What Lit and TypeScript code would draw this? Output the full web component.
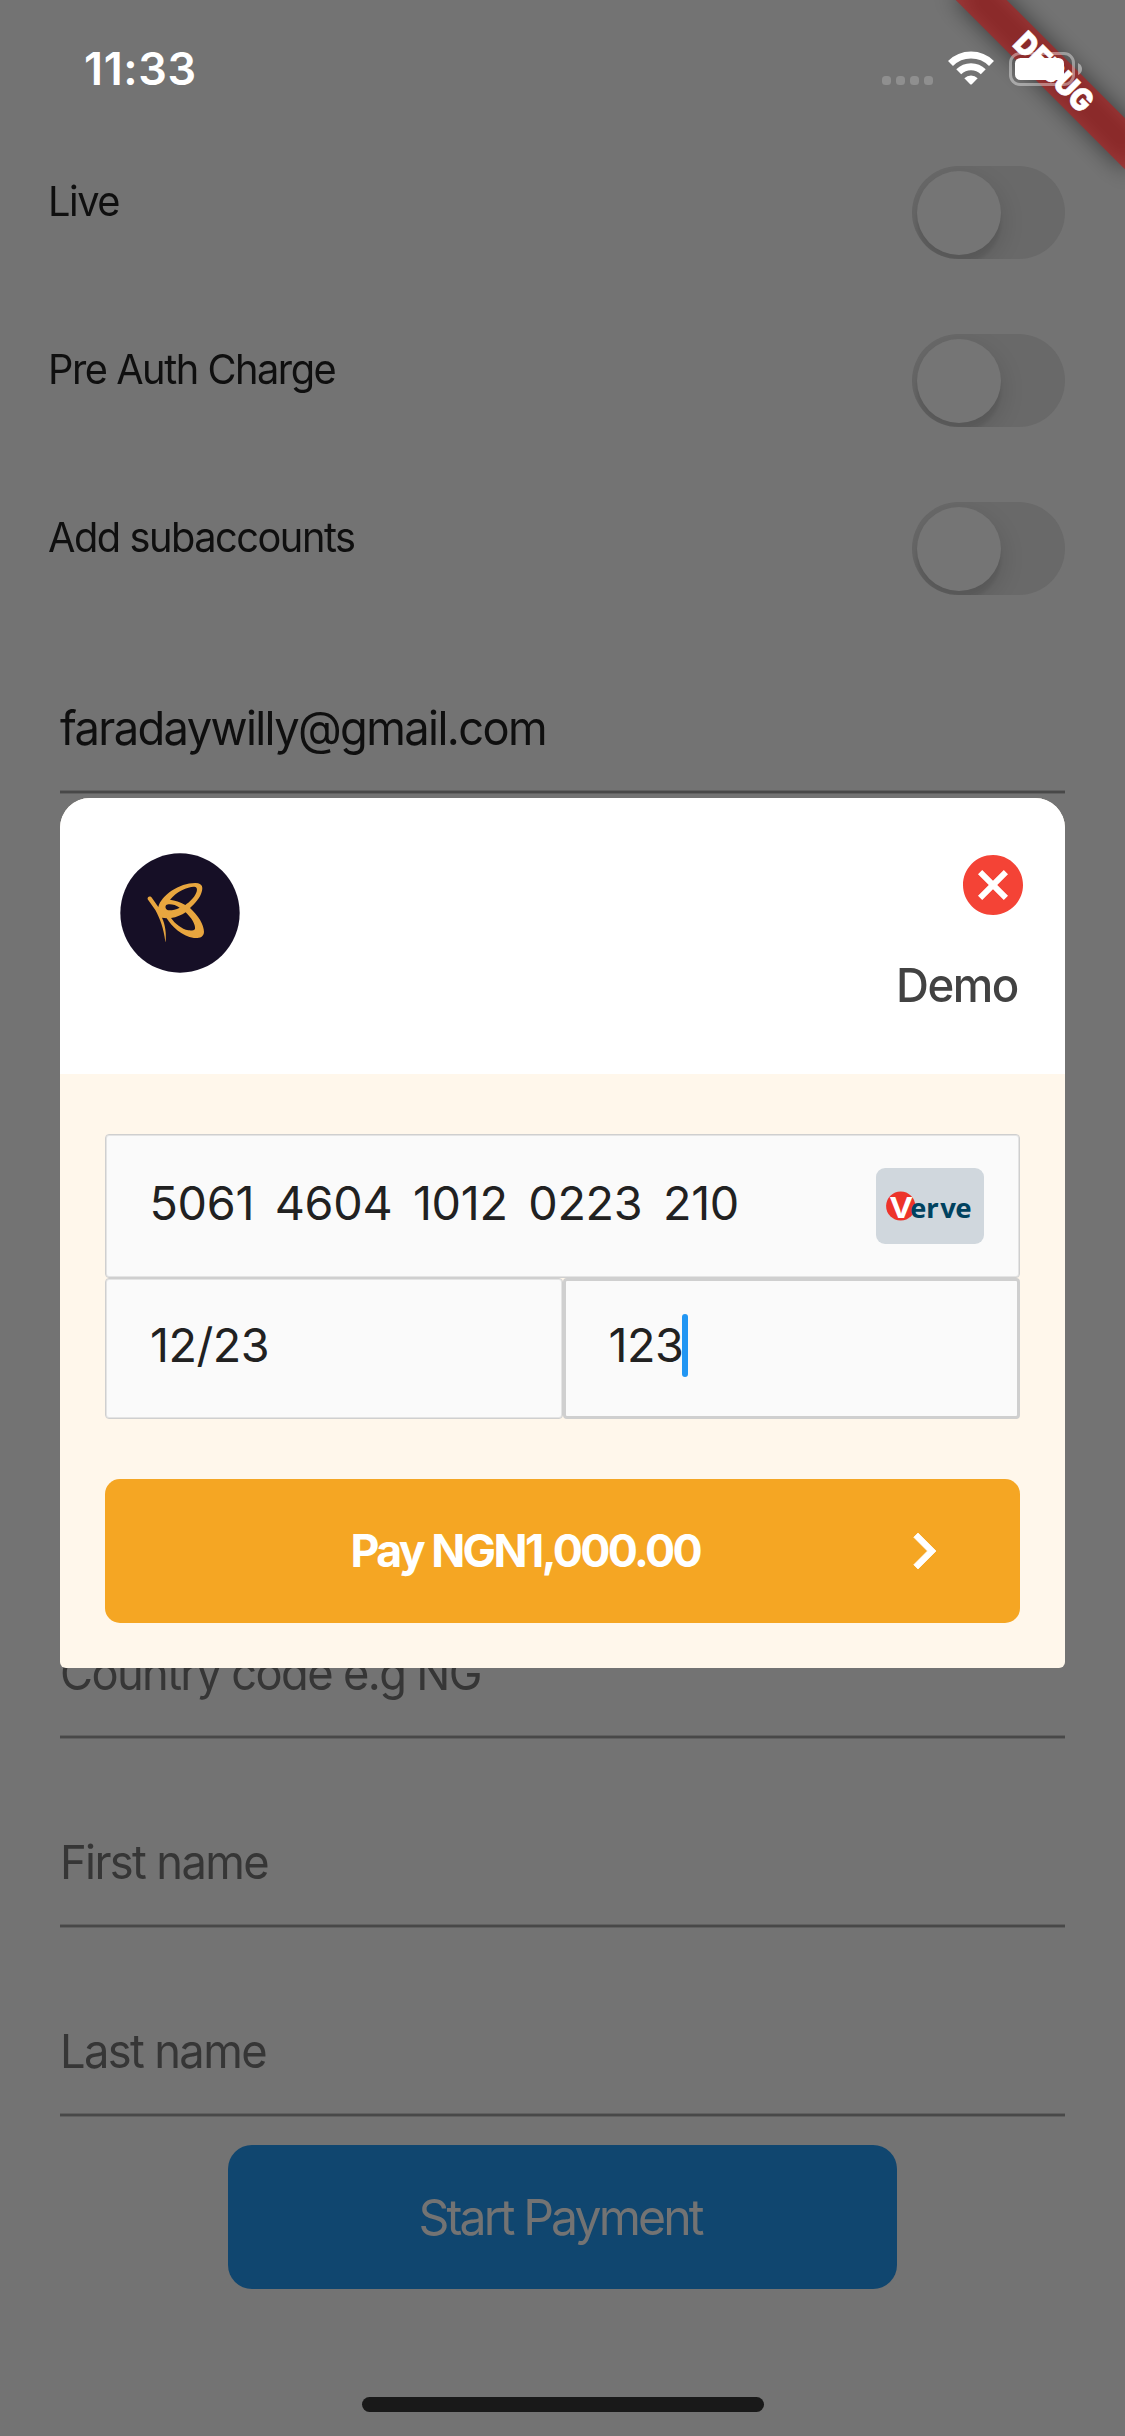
import { LitElement, html, svg, css } from "lit";
import { customElement, property } from "lit/decorators.js";

const wifiIcon = svg`
  <path d="M376.5 191.5A87 87 0 0 1 499.5 191.5" fill="none" stroke="#fff" stroke-width="21" />
  <path d="M401.2 216.2A52 52 0 0 1 474.8 216.2" fill="none" stroke="#fff" stroke-width="21" />
  <path d="M418 235.500A28.500 28.500 0 0 1 458 235.500L440.500 253.500Q438 256 435.500 253.500Z" fill="#fff" />`;

const butterfly = svg`
  <circle cx="420" cy="400" r="179" fill="#160f26" />
  <path fill="#e8a63f" fill-rule="evenodd" d="M323 359C321 351 331 347 336 355L355 382C364 346 420 309 467 310C489 311 489 325 485 337C480 355 465 372 450 385C475 408 492 435 492 457C491 474 476 476 462 475C425 470 395 440 380 416L366 414C376 435 379 460 377 486L376 486C371 445 360 417 346 391ZM390 360C410 335 445 320 463 321C473 322 472 332 468 341C462 355 448 368 436 376C420 366 405 362 390 360ZM393 415C410 413 425 406 437 398C455 415 467 435 465 447C463 453 452 453 445 452C425 448 405 432 393 415ZM378 377C385 371 405 374 419 384C405 391 390 393 382 391C376 388 375 382 378 377Z" />`;

@customElement("status-bar")
export class StatusBar extends LitElement {
  static styles = css`
    :host { display: flex; justify-content: space-between; height: 132px; box-sizing: border-box; position: relative; z-index: 3; padding: 0 42px 0 84px; color: #fff; }
    .time { font-size: 45px; line-height: 60px; font-weight: 600; padding-top: 39px; letter-spacing: 0.6px; }
    .icons { display: flex; align-items: flex-start; padding-top: 51px; }
    .dots { display: flex; gap: 5px; padding-top: 25px; margin-right: 15px; }
    .dot { width: 9px; height: 9px; border-radius: 3.5px; background: #8f8f8f; }
    .wifi { width: 46px; height: 34px; margin-right: 15px; display: block; }
    .battery { width: 74px; height: 36px; display: block; }
  `;
  render() {
    return html`
      <div class="time">11:33</div>
      <div class="icons">
        <div class="dots">${[0, 1, 2, 3].map(() => html`<i class="dot"></i>`)}</div>
        <svg class="wifi" viewBox="369 154 138 102">${wifiIcon}</svg>
        <svg class="battery" viewBox="0 0 74 36">
          <rect x="1.500" y="2.500" width="63" height="31" rx="9.500" fill="none" stroke="#fff" stroke-opacity=".4" stroke-width="3" />
          <rect x="6" y="7" width="49" height="22" rx="5.500" fill="#fff" />
          <path d="M69 12Q73 14 73 18T69 24Z" fill="#fff" fill-opacity=".45" />
        </svg>
      </div>`;
  }
}

@customElement("toggle-row")
export class ToggleRow extends LitElement {
  @property() label = "";
  static styles = css`
    :host { display: flex; justify-content: space-between; align-items: flex-start; height: 93px; }
    .label { font-size: 41px; line-height: 60px; padding-top: 5px; margin-left: -0.5px; color: #0f0f0f; letter-spacing: -1.53px; white-space: nowrap; transform: scaleX(.97); transform-origin: left; }
    .track { width: 153px; height: 93px; box-sizing: border-box; padding: 4.5px; border-radius: 47px; background: #696969; overflow: hidden; }
    .thumb { width: 84px; height: 84px; border-radius: 50%; background: #757575; box-shadow: 0 9px 24px rgba(0, 0, 0, .15), 0 9px 3px rgba(0, 0, 0, .06); }
  `;
  render() {
    return html`<span class="label">${this.label}</span>
      <div class="track"><div class="thumb"></div></div>`;
  }
}

@customElement("text-line")
export class TextLine extends LitElement {
  @property() value = "";
  @property() placeholder = "";
  static styles = css`
    :host { display: flex; flex-direction: column; justify-content: flex-end; height: 189px; }
    .text { font-size: 46.7px; line-height: 60px; padding-bottom: 32.5px; margin-left: -0.5px; white-space: nowrap; transform: scaleX(.97); transform-origin: left; }
    .value { color: #0f0f0f; letter-spacing: -1.68px; }
    .hint { color: #363636; letter-spacing: -1.7px; }
    .rule { height: 2px; background: #484848; border-top: 1px solid #606060; border-bottom: 1px solid #606060; }
  `;
  render() {
    return html`<div class="text ${this.value ? "value" : "hint"}">${this.value || this.placeholder}</div>
      <div class="rule"></div>`;
  }
}

@customElement("payment-dialog")
export class PaymentDialog extends LitElement {
  static styles = css`
    :host { display: flex; flex-direction: column; height: 870px; border-radius: 30px 30px 6px 6px; overflow: hidden; background: #fff7eb; }
    .head { height: 276px; box-sizing: border-box; background: #fff; display: flex; justify-content: space-between; padding: 55px 36px 0 60px; }
    .logo { width: 120px; height: 120px; display: block; }
    .right { display: flex; flex-direction: column; align-items: flex-end; }
    .close { width: 72px; height: 72px; margin: -4px 0 0; display: block; }
    .merchant { font-size: 47px; line-height: 60px; margin-top: 34px; padding-right: 12px; color: #424242; font-weight: 500; letter-spacing: -1.6px; transform: scaleX(.97); transform-origin: right; }
    .body { flex: 1; display: flex; flex-direction: column; padding: 60px 45px 45px; }
    .field { background: #fafafa; border: 1px solid #cfcfcf; box-shadow: inset 0 0 0 1px #e4e4e4; border-radius: 4px; box-sizing: border-box; display: flex; font-size: 46.7px; line-height: 60px; color: #212121; white-space: pre; letter-spacing: -0.3px; }
    .card { height: 144px; padding: 38px 35px 0 43.5px; justify-content: space-between; word-spacing: -2.5px; }
    .row { display: grid; grid-template-columns: 457.5px 457.5px; }
    .half { height: 141px; padding: 36px 0 0 44px; letter-spacing: -0.5px; }
    .focused { border: 3px solid #cfcfcf; box-shadow: none; padding: 34px 0 0 43px; }
    .caret { width: 6px; height: 63px; border-radius: 3px; background: #2196f3; margin: -1px 0 0 -1px; }
    .verve { width: 108px; height: 76px; display: block; margin-top: -5px; }
    .pay { margin-top: 60px; height: 144px; border-radius: 15px; background: #f5a623; display: grid; grid-template-columns: 1fr auto; align-items: center; color: #fff; padding-right: 60px; }
    .payLabel { font-size: 44.7px; line-height: 60px; font-weight: 700; letter-spacing: -2.6px; padding-left: 245.5px; white-space: nowrap; }
    .chev { width: 72px; height: 72px; display: block; }
  `;
  render() {
    return html`
      <div class="head">
        <svg class="logo" viewBox="240 220 360 360">${butterfly}</svg>
        <div class="right">
          <svg class="close" viewBox="0 0 24 24"><path fill="#f44336" d="M12 2C6.470 2 2 6.470 2 12s4.470 10 10 10 10-4.470 10-10S17.530 2 12 2zm5 13.590L15.590 17 12 13.410 8.410 17 7 15.590 10.590 12 7 8.410 8.410 7 12 10.590 15.590 7 17 8.410 13.410 12 17 15.590z" /></svg>
          <div class="merchant">Demo</div>
        </div>
      </div>
      <div class="body">
        <div class="field card"><span>5061  4604  1012  0223  210</span>
          <svg class="verve" viewBox="0 0 108 76">
            <rect width="108" height="76" rx="9" fill="#d0d7dd" />
            <circle cx="24.700" cy="38" r="14.600" fill="#ed332a" />
            <text x="14" y="49.700" textLength="22" lengthAdjust="spacingAndGlyphs" font-family="Noto Sans, sans-serif" font-weight="700" font-size="28.500" fill="#fff">V</text>
            <text x="34 50.300 64.300 79.200" y="49.600" font-family="Noto Sans, sans-serif" font-weight="700" font-size="27.500" fill="#00425f">erve</text>
          </svg>
        </div>
        <div class="row">
          <div class="field half">12/23</div>
          <div class="field half focused">123<i class="caret"></i></div>
        </div>
        <div class="pay">
          <span class="payLabel">Pay NGN1,000.00</span>
          <svg class="chev" viewBox="0 0 24 24"><path fill="#fff" stroke="#fff" stroke-width=".25" d="M10 6L8.590 7.410 13.170 12l-4.580 4.590L10 18l6-6z" /></svg>
        </div>
      </div>`;
  }
}

@customElement("app-root")
export class AppRoot extends LitElement {
  static styles = css`
    :host { display: block; position: relative; width: 1125px; height: 2436px; overflow: hidden; background: #737373; font-family: Inter, "Liberation Sans", sans-serif; }
    .toggles { display: flex; flex-direction: column; gap: 75px; padding: 34px 60px 10px 48px; }
    .fields { display: flex; flex-direction: column; padding: 0 60px; }
    .later { margin-top: 756px; }
    .start { width: 669px; height: 144px; margin: 28px auto 0; border-radius: 24px; background: #10466f; color: #737373; font-size: 49.7px; line-height: 144px; text-align: center; letter-spacing: -3px; }
    .startLabel { display: block; margin-right: 5px; transform: scaleX(.97); }
    .home { width: 402px; height: 15px; border-radius: 7.5px; background: #191919; margin: 108px auto 0; }
    .dialog { position: absolute; z-index: 1; top: 798px; left: 60px; right: 60px; }
    .ribbon { position: absolute; z-index: 2; top: 0; right: 0; width: 300px; height: 300px; display: block; }
  `;
  render() {
    return html`
      <status-bar></status-bar>
      <div class="toggles">
        ${["Live", "Pre Auth Charge", "Add subaccounts"].map((t) => html`<toggle-row .label=${t}></toggle-row>`)}
      </div>
      <div class="fields">
        <text-line value="faradaywilly@gmail.com"></text-line>
        <text-line class="later" placeholder="Country code e.g NG"></text-line>
        <text-line placeholder="First name"></text-line>
        <text-line placeholder="Last name"></text-line>
      </div>
      <div class="start"><span class="startLabel">Start Payment</span></div>
      <div class="home"></div>
      <payment-dialog class="dialog"></payment-dialog>
      <svg class="ribbon" viewBox="825 0 300 300">
        <defs><filter id="soft" x="-20%" y="-150%" width="140%" height="400%"><feGaussianBlur stdDeviation="11.900" /></filter></defs>
        <g transform="translate(1052.500 71.300) rotate(45)">
          <rect x="-120" y="-18" width="240" height="36" fill="#000" fill-opacity=".5" filter="url(#soft)" />
          <rect x="-120" y="-18" width="240" height="36" fill="#b71c1c" fill-opacity=".627" />
          <text x="1.500" y="10.500" text-anchor="middle" textLength="98" lengthAdjust="spacingAndGlyphs" font-family="Inter, sans-serif" font-weight="900" font-size="31" fill="#fff" stroke="#fff" stroke-width=".6">DEBUG</text>
        </g>
      </svg>`;
  }
}
